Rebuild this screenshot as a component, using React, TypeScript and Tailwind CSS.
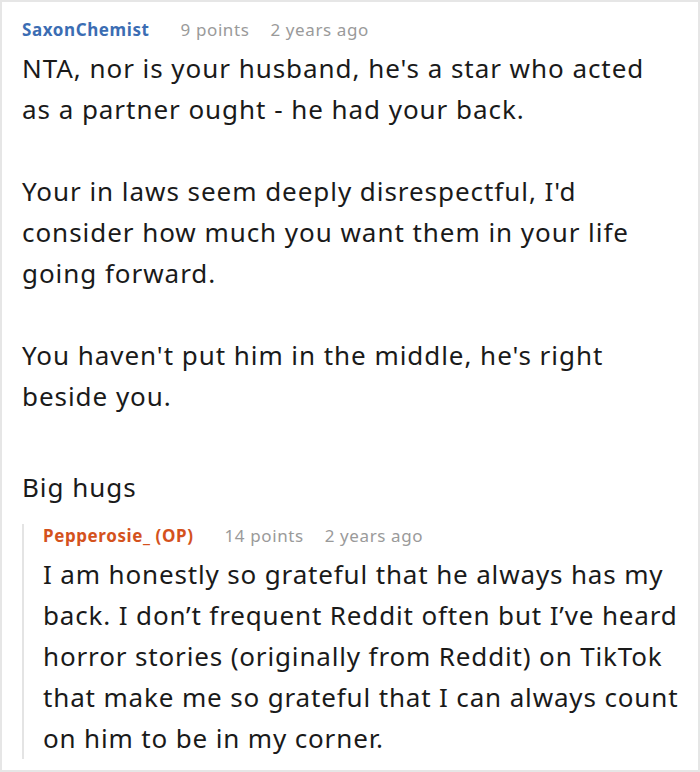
import React from 'react';

interface CommentProps {
  author: string;
  authorClass: string;
  points: string;
  age: string;
  paragraphs: string[][];
  bodyTracking: string;
}

const Comment: React.FC<CommentProps> = ({ author, authorClass, points, age, paragraphs, bodyTracking }) => (
  <div>
    <div className="flex items-baseline text-[17px] leading-[24px] tracking-[0.6px]">
      <span className={`font-bold ${authorClass}`}>{author}</span>
      <span className="text-[#9a9a9a] ml-[31px]">{points}</span>
      <span className="text-[#9a9a9a] ml-[21px]">{age}</span>
    </div>
    <div className={`mt-[6px] text-[26px] leading-[41px] text-[#1a1a1a] ${bodyTracking}`}>
      {paragraphs.map((lines, i) => (
        <p key={i} className={i === 0 ? '' : i === paragraphs.length - 1 && i > 2 ? 'mt-[50px]' : 'mt-[41px]'}>
          {lines.map((line, j) => (
            <span key={j} className="block whitespace-nowrap">
              {line}
            </span>
          ))}
        </p>
      ))}
    </div>
  </div>
);

export default function App() {
  return (
    <div
      className="w-[700px] h-[772px] bg-white border-2 border-[#e6e6e6] pl-[20px] pt-[16px] overflow-hidden"
      style={{ fontFamily: '"Noto Sans", "Open Sans", sans-serif' }}
    >
      <Comment
        author="SaxonChemist"
        authorClass="text-[#3b6db3]"
        points="9 points"
        age="2 years ago"
        bodyTracking="tracking-[0.95px]"
        paragraphs={[
          ["NTA, nor is your husband, he's a star who acted", 'as a partner ought - he had your back.'],
          ["Your in laws seem deeply disrespectful, I'd", 'consider how much you want them in your life', 'going forward.'],
          ["You haven't put him in the middle, he's right", 'beside you.'],
          ['Big hugs'],
        ]}
      />
      <div className="mt-[26px] border-l-2 border-[#e4e4e4] pl-[19px]">
        <div className="-mt-[10px] -mb-[8px]">
          <Comment
            author="Pepperosie_ (OP)"
            authorClass="text-[#d4521d]"
            points="14 points"
            age="2 years ago"
            bodyTracking="tracking-[0.85px]"
            paragraphs={[
              [
                'I am honestly so grateful that he always has my',
                'back. I don’t frequent Reddit often but I’ve heard',
                'horror stories (originally from Reddit) on TikTok',
                'that make me so grateful that I can always count',
                'on him to be in my corner.',
              ],
            ]}
          />
        </div>
      </div>
    </div>
  );
}
